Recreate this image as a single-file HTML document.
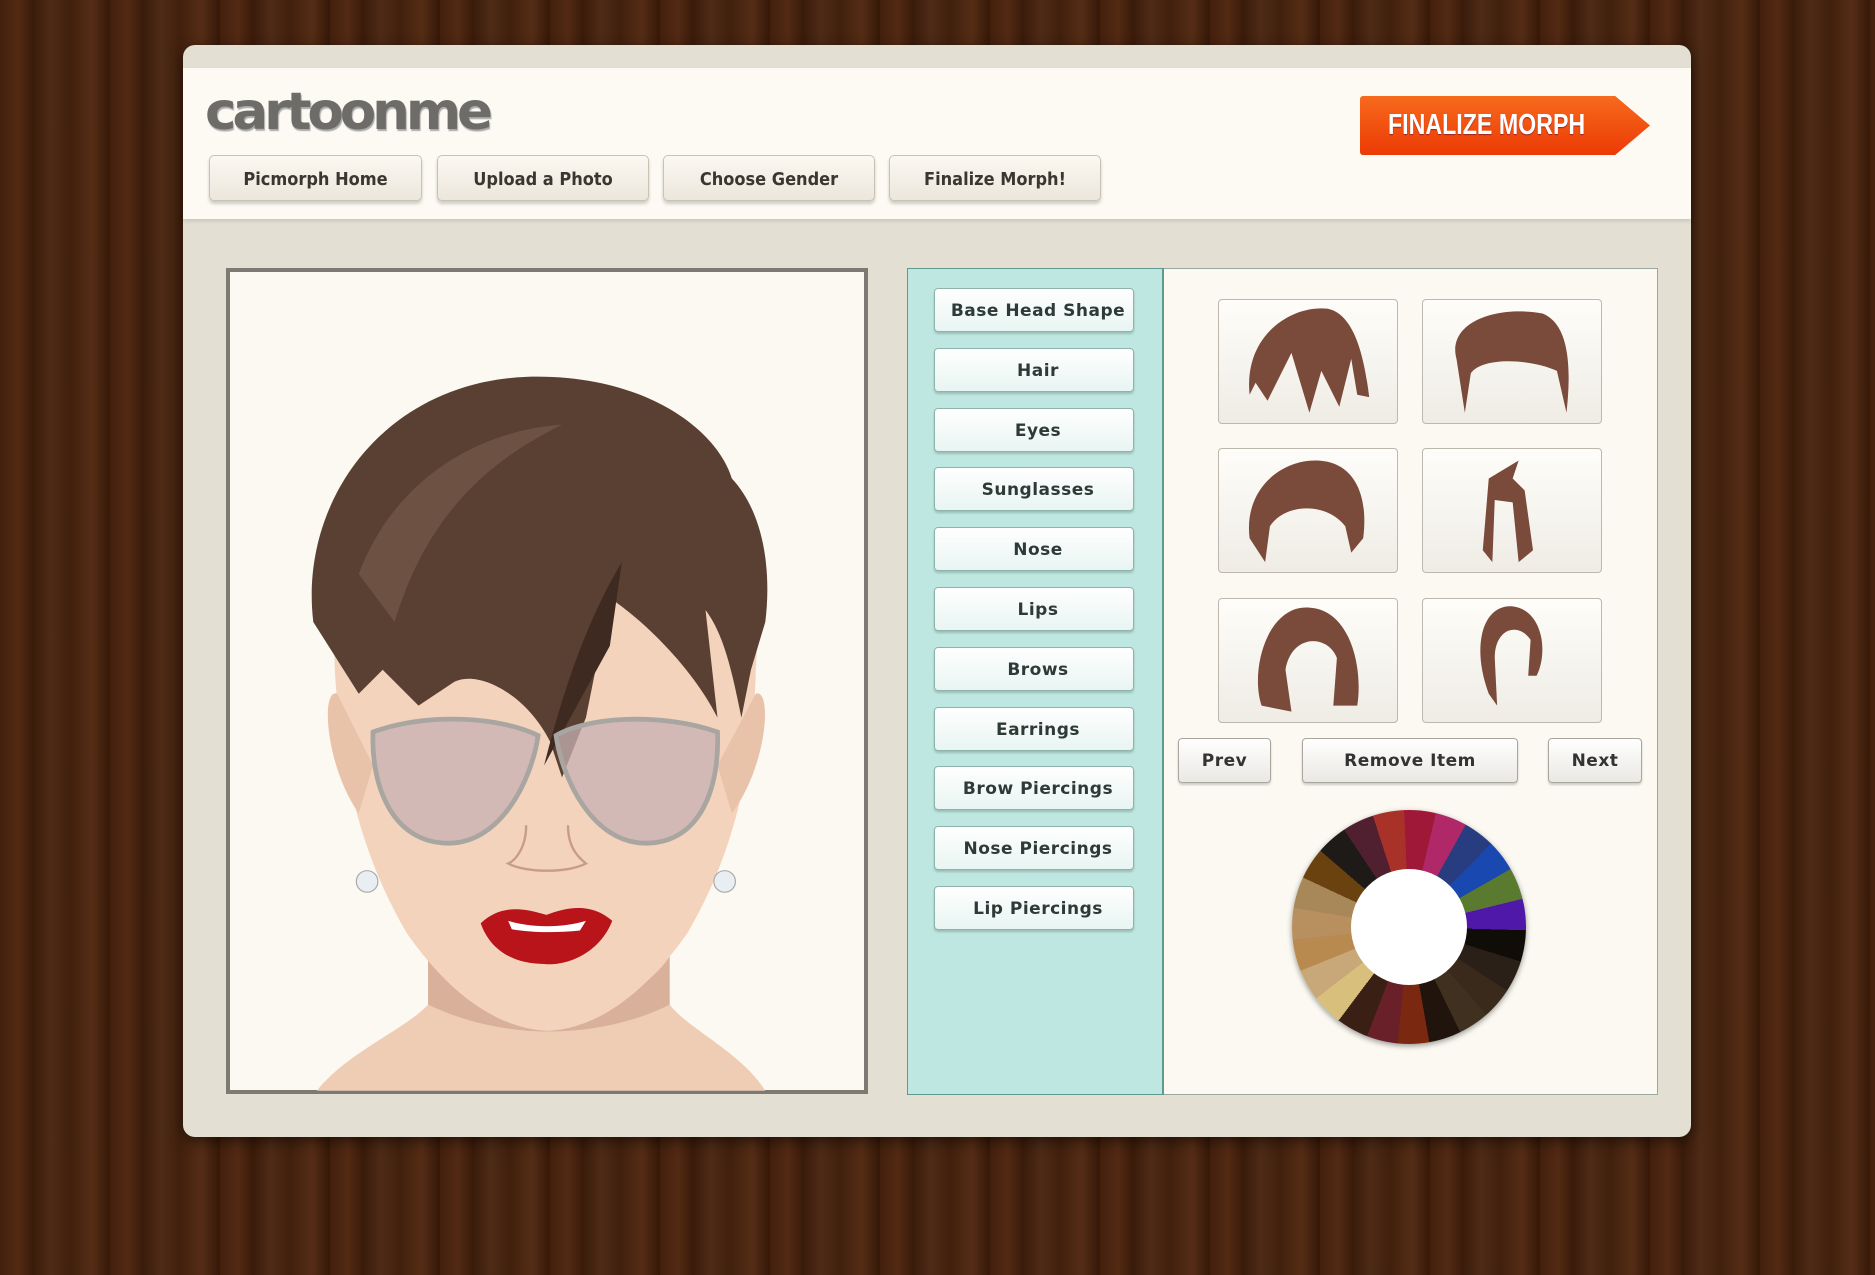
<!DOCTYPE html>
<html><head><meta charset="utf-8"><style>
*{margin:0;padding:0;box-sizing:border-box}
body{width:1875px;height:1275px;overflow:hidden;position:relative;font-family:"DejaVu Sans",sans-serif;
background:repeating-linear-gradient(90deg,#43200d 0px,#532a14 18px,#3a1b0a 33px,#4e2b17 51px,#41200d 70px,#552d16 92px,#351808 110px);}
.abs{position:absolute}
#panel{left:183px;top:45px;width:1508px;height:1092px;background:#e4dfd3;border-radius:12px;box-shadow:0 4px 14px rgba(0,0,0,.5)}
#head{left:183px;top:68px;width:1508px;height:151px;background:#fcfaf3;box-shadow:0 2px 4px rgba(0,0,0,.12)}
.logo{left:205px;top:82px;font:bold 52px "DejaVu Sans",sans-serif;color:#6d6c68;letter-spacing:-4px;text-shadow:1px 2px 1px #aaa;transform:scaleX(1.02);transform-origin:left}
.nav{height:46px;top:155px;border:1px solid #c8c2b4;border-radius:5px;background:linear-gradient(#fbf8f1,#ece7dc);box-shadow:0 3px 3px rgba(0,0,0,.18);font:bold 18px "DejaVu Sans Condensed","DejaVu Sans",sans-serif;color:#3a3630;text-align:center;line-height:48px}
#fin{left:1360px;top:96px;width:290px;height:59px;background:linear-gradient(#f76a1c,#ec3a06);clip-path:polygon(0 0,88% 0,100% 50%,88% 100%,0 100%);border-radius:3px}
#fint{left:1388px;top:96px;height:59px;color:#fff;font:bold 29px "Liberation Sans",sans-serif;line-height:59px;text-shadow:0 1px 1px #922;transform:scaleX(.8);transform-origin:left;white-space:nowrap}
#frame{left:226px;top:268px;width:642px;height:826px;border:4px solid #7c7a72;background:#fbf9f1}
#rp{left:907px;top:268px;width:751px;height:827px;border:1px solid #9aa89f;background:#fbf9f1}
#teal{left:907px;top:268px;width:257px;height:827px;background:#bde7e0;border:1px solid #5f9a90;border-right:2px solid #5f9a90}
.sb{left:934px;width:200px;height:44px;border:1px solid #8fb3ab;border-radius:4px;background:linear-gradient(#ffffff,#e8f5f2);box-shadow:0 2px 2px rgba(0,0,0,.18);font:bold 17px "DejaVu Sans",sans-serif;color:#2e3a38;text-align:center;line-height:45px;letter-spacing:.5px;padding-left:8px}
.tile{width:180px;height:125px;border:1px solid #bdb8ad;border-radius:4px;background:linear-gradient(#fefdf9,#efece5)}
.pb{top:738px;height:45px;border:1px solid #aaa69c;border-radius:4px;background:linear-gradient(#fff,#eae8e3);box-shadow:0 2px 2px rgba(0,0,0,.18);font:bold 17px "DejaVu Sans",sans-serif;color:#333;text-align:center;line-height:45px;letter-spacing:.5px}
#wheel{left:1292px;top:810px;width:234px;height:234px;border-radius:50%;box-shadow:0 2px 6px rgba(0,0,0,.4);
background:conic-gradient(from -18deg,#a83228 0 15.6deg,#a01838 0 31.3deg,#b02868 0 47deg,#283c80 0 62.6deg,#1848b0 0 78.3deg,#5a7a30 0 94deg,#5018a8 0 109.6deg,#100c08 0 125.2deg,#2a2018 0 141deg,#3a2a1c 0 156.5deg,#403020 0 172deg,#20140c 0 188deg,#7a2810 0 203.5deg,#6a2028 0 219deg,#3a2014 0 235deg,#d8c07c 0 250.4deg,#c8a878 0 266deg,#b88a50 0 281.7deg,#b89060 0 297.4deg,#a88858 0 313deg,#6a4210 0 328.7deg,#1e1a18 0 344.3deg,#502030 0 360deg)}
#hole{left:1351px;top:869px;width:116px;height:116px;border-radius:50%;background:#fff}
</style></head><body>
<div id="panel" class="abs"></div>
<div id="head" class="abs"></div>
<div class="abs logo">cartoonme</div>
<div class="abs nav" style="left:209px;width:213px">Picmorph Home</div>
<div class="abs nav" style="left:437px;width:212px">Upload a Photo</div>
<div class="abs nav" style="left:663px;width:212px">Choose Gender</div>
<div class="abs nav" style="left:889px;width:212px">Finalize Morph!</div>
<div id="fin" class="abs"></div>
<div id="fint" class="abs">FINALIZE MORPH</div>
<div id="frame" class="abs"></div>
<div id="rp" class="abs"></div>
<div id="teal" class="abs"></div>
<div class="abs sb" style="top:288px">Base Head Shape</div>
<div class="abs sb" style="top:348px">Hair</div>
<div class="abs sb" style="top:408px">Eyes</div>
<div class="abs sb" style="top:467px">Sunglasses</div>
<div class="abs sb" style="top:527px">Nose</div>
<div class="abs sb" style="top:587px">Lips</div>
<div class="abs sb" style="top:647px">Brows</div>
<div class="abs sb" style="top:707px">Earrings</div>
<div class="abs sb" style="top:766px">Brow Piercings</div>
<div class="abs sb" style="top:826px">Nose Piercings</div>
<div class="abs sb" style="top:886px">Lip Piercings</div>
<div class="abs tile" style="left:1218px;top:299px"></div>
<div class="abs tile" style="left:1422px;top:299px"></div>
<div class="abs tile" style="left:1218px;top:448px"></div>
<div class="abs tile" style="left:1422px;top:448px"></div>
<div class="abs tile" style="left:1218px;top:598px"></div>
<div class="abs tile" style="left:1422px;top:598px"></div>
<div class="abs pb" style="left:1178px;width:93px">Prev</div>
<div class="abs pb" style="left:1302px;width:216px">Remove Item</div>
<div class="abs pb" style="left:1548px;width:94px">Next</div>
<div id="wheel" class="abs"></div>
<div id="hole" class="abs"></div>
<svg class="abs" style="left:0;top:0" width="1875" height="1275" viewBox="0 0 1568 1066">
<g fill="#7a4a3a">
<path d="M1045,330 C1040,280 1080,255 1110,258 C1130,262 1140,290 1145,332 L1135,330 1130,300 1120,340 1105,310 1095,345 1080,295 1060,335 1050,320 Z"/>
<path d="M1218,300 C1210,270 1250,255 1290,262 C1310,270 1315,300 1310,345 L1302,310 C1280,300 1240,298 1230,312 L1225,345 Z"/>
<path d="M1045,450 C1040,410 1070,385 1100,385 C1130,385 1145,410 1140,450 L1130,462 1125,440 C1110,420 1075,420 1062,440 L1058,470 Z"/>
<path d="M1245,400 L1270,385 1265,400 1275,410 1282,460 1270,470 1265,420 1250,418 1248,470 1240,460 Z"/>
<path d="M1055,590 C1045,560 1060,505 1095,508 C1130,510 1140,560 1135,590 L1115,590 1118,550 C1110,530 1080,530 1075,560 L1080,595 Z"/>
<path d="M1245,580 C1230,540 1240,505 1265,507 C1290,510 1295,545 1285,565 L1278,565 1280,535 C1270,520 1250,525 1250,550 L1252,590 Z"/>
</g>
<path d="M265,912 C290,880 340,860 358,840 L358,780 560,780 560,840 C575,860 620,880 640,912 Z" fill="#efcdb4"/>
<path d="M358,800 C400,860 520,860 560,800 L560,840 C500,870 420,870 358,840 Z" fill="#d9b09a"/>
<path d="M280,560 C275,450 330,400 460,400 C590,400 640,450 632,560 C630,650 610,720 575,780 C540,830 500,860 458,862 C415,860 375,830 340,780 C305,720 285,650 280,560 Z" fill="#f3d3bc"/>
<path d="M282,580 C268,575 272,640 300,680 L312,640 Z M632,580 C646,575 642,640 612,680 L600,640 Z" fill="#e9c2aa"/>
<path d="M262,520 C250,420 320,320 440,315 C540,312 600,360 612,400 C640,430 645,480 640,520 L628,560 620,600 C612,560 605,530 590,510 L600,600 C580,560 540,520 510,500 L490,600 470,650 460,620 C440,580 400,560 380,570 L350,590 320,560 300,580 Z" fill="#5a4032"/>
<path d="M300,480 C330,400 400,360 470,355 C420,380 360,420 330,520 Z" fill="#6d5244"/>
<path d="M455,640 C470,580 490,520 520,470 L510,540 Z" fill="#3e2a20"/>
<g fill="#c8b0b4" fill-opacity=".75" stroke="#a9a6a2" stroke-width="4">
<path d="M312,612 C360,595 420,600 450,615 C445,650 420,705 375,705 C330,705 310,660 312,612 Z"/>
<path d="M600,612 C550,595 490,600 465,615 C470,650 495,705 540,705 C585,705 602,660 600,612 Z"/>
</g>
<path d="M440,690 C440,710 430,720 425,722 C440,730 475,730 490,722 C485,718 475,710 475,690" fill="none" stroke="#c99c88" stroke-width="2"/>
<path d="M402,772 C420,755 440,760 457,765 C475,758 495,755 512,770 C500,800 470,808 455,806 C430,806 410,795 402,772 Z" fill="#b8141a"/>
<path d="M425,770 C445,776 470,776 490,770 L485,778 C465,780 445,780 428,777 Z" fill="#fff"/>
<circle cx="307" cy="737" r="9" fill="#e8eef2" stroke="#aaa"/>
<circle cx="606" cy="737" r="9" fill="#e8eef2" stroke="#aaa"/>
</svg>
</body></html>
